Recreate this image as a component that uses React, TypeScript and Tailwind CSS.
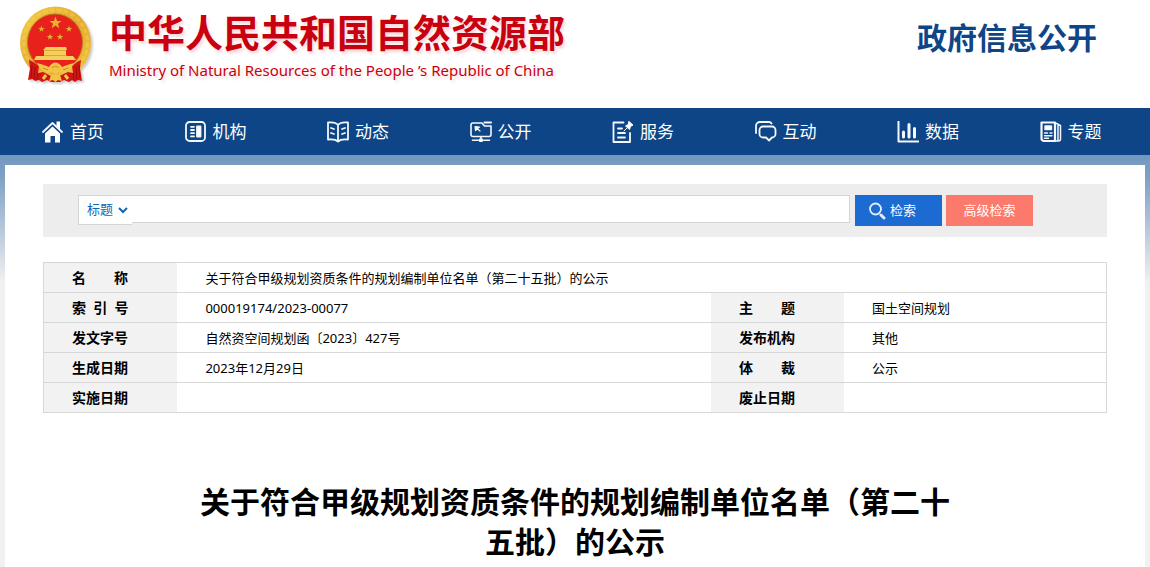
import React from "react";

const star = "M0 -10 L2.4 -3.1 L9.5 -3.1 L3.8 1.2 L5.9 8.1 L0 3.9 L-5.9 8.1 L-3.8 1.2 L-9.5 -3.1 L-2.4 -3.1 Z";

function Emblem() {
  return (
    <svg viewBox="0 0 74 80" className="h-20 w-[74px] shrink-0 drop-shadow-[2px_2px_1px_rgba(0,0,0,0.2)]" aria-hidden="true">
      <defs>
        <linearGradient id="gold" x1="0" y1="0" x2="1" y2="1">
          <stop offset="0" stopColor="#f6cf4a" />
          <stop offset="0.5" stopColor="#e2a92e" />
          <stop offset="1" stopColor="#f3c63f" />
        </linearGradient>
      </defs>
      <ellipse cx="36.500" cy="37" rx="35.500" ry="36.500" fill="url(#gold)" />
      <ellipse cx="36.500" cy="37" rx="32" ry="33" fill="none" stroke="#f8d95f" strokeWidth="3" strokeDasharray="5 2" opacity="0.35" />
      <ellipse cx="36" cy="36.500" rx="27.500" ry="28.500" fill="#e8211d" stroke="#b8741c" strokeWidth="1" />
      <g fill="#e3b32f">
        <path d={star} transform="translate(36.500 17) scale(0.65)" />
        <path d={star} transform="translate(22.500 23) scale(0.34)" />
        <path d={star} transform="translate(50 23) scale(0.34)" />
        <path d={star} transform="translate(31 31) scale(0.34)" />
        <path d={star} transform="translate(41 31) scale(0.34)" />
      </g>
      <path d="M27 41h20l1 3h-1v6h7l3 4H15l2-4h8v-6h-1z" fill="#f5cf5b" />
      <path d="M26 44.500h21M25 49.500h23" stroke="#d79a2b" strokeWidth="0.800" />
      <path d="M10 54c3 1 6 3 10 6l-1 7 5-1 12 6 13-6 5 1-1-7c4-3 6-5 9-6l-1 8 2 13-4-1-3 2-3-2-3 2-5-2-4 2h-9l-4-2-5 2-3-2-4 1-2-2-5 1 2-12z" fill="#d21415" />
      <path d="M13 59l-1 13M16 61l-1 13M19 67l-1 7M60 59l1 13M57 61l1 13M54 67l1 7" stroke="#9c0d0f" strokeWidth="0.900" />
      <path d="M18 57c5 1 9 3 12 4 2-3 4-4.500 6.500-4.500S41 58 43 61c3-1 7-3 12-4-2 5-6 9-11 10l-4-1-3.500 2-3.500-2-4 1c-5-1-9-5-11-10z" fill="#f2c445" />
      <path d="M33 62c1-2 6-2 7 0M24 62l5 2M49 62l-5 2" fill="none" stroke="#c98a20" strokeWidth="1" />
      <path d="M32 69h9l2 6-4-1-2.500 2-2.500-2-4 1z" fill="#f2c445" />
      <path d="M27 69l-3 4M46 69l3 4" stroke="#f2c445" strokeWidth="3" />
    </svg>
  );
}

function NavIcon({ children }: { children: React.ReactNode }) {
  return (
    <svg viewBox="0 0 22 22" className="size-[22px] shrink-0" fill="none" stroke="#f4f7fb" strokeWidth="1.800" strokeLinejoin="round" strokeLinecap="round" aria-hidden="true">
      {children}
    </svg>
  );
}

const navItems = [
  {
    label: "首页",
    icon: (
      <>
        <path d="M3 12.500 10.500 5.500l7.500 7V21.500H13v-6.500H8.500v6.500H3z" fill="#fff" stroke="none" />
        <path d="M1 11 10.500 2l9.500 9" />
        <path d="M14.500 0.500h3.500v8l-3.500-3.500z" fill="#fff" stroke="none" />
      </>
    ),
  },
  {
    label: "机构",
    icon: (
      <>
        <rect x="1" y="1" width="19" height="19" rx="3.500" />
        <path d="M12 5.500h3.500v10H12z" fill="#fff" />
        <path d="M6 5.800h3M6 9h3M6 12.200h3M6 15.400h3" />
      </>
    ),
  },
  {
    label: "动态",
    icon: (
      <>
        <path d="M11 4C9 1.500 5 1 1 1.500v17c4-.5 8 0 10 2 2-2 6-2.500 10-2v-17c-4-.5-8 0-10 2.500zM11 4v16" />
        <path d="M4 7l3 1M4 12l3 1M15 8l3-1M15 13l3-1" strokeWidth="1.800" />
      </>
    ),
  },
  {
    label: "公开",
    icon: (
      <>
        <path d="M12 2H3a2 2 0 0 0-2 2v9.500a2 2 0 0 0 2 2h16a2 2 0 0 0 2-2V5h-6.500z" strokeWidth="1.600" />
        <path d="M14.500 1.500h6.500" strokeWidth="2" />
        <path d="M5 5.500l4.500.5L5.500 9.500zM7 7.500l3 2.500" strokeWidth="1.200" fill="#fff" />
        <path d="M11 16v3M2.500 19.200h6M13.500 19.200h6" strokeWidth="1.600" />
        <rect x="9" y="17.500" width="4" height="3.500" rx="1" fill="#fff" stroke="none" />
      </>
    ),
  },
  {
    label: "服务",
    icon: (
      <>
        <path d="M11.500 1.500H1.500v19.500h16.500V12" />
        <path d="M6 7.500h4M6 12h7M6 16.500h7" />
        <path d="M17 0.500 21 4l-2.500 1.500-1 3-4-3.500 2.500-1.500zM15 7l-3 3" fill="#fff" strokeWidth="1" />
      </>
    ),
  },
  {
    label: "互动",
    icon: (
      <>
        <path d="M1 12V5a4 4 0 0 1 4-4h9a3 3 0 0 1 2.500 1.500" />
        <path d="M8 5.500h9a3.500 3.500 0 0 1 3.500 3.500v4a3.500 3.500 0 0 1-3.500 3.500l-3 3-3-3H8A3.500 3.500 0 0 1 4.500 13V9A3.500 3.500 0 0 1 8 5.500z" />
      </>
    ),
  },
  {
    label: "数据",
    icon: (
      <>
        <path d="M1.500 1v19.500H21.500" strokeLinecap="square" strokeWidth="2" />
        <path d="M6.500 11v5M12 3.500v12.500M17.500 7.500v8.500" strokeWidth="3" />
      </>
    ),
  },
  {
    label: "专题",
    icon: (
      <>
        <path d="M1.500 1.500H15V20H4a2.500 2.500 0 0 1-2.500-2.500z" strokeWidth="2.200" />
        <path d="M15 2l3 1v15.500A1.500 1.500 0 0 1 16.500 20H15M18 3.500l2.500 1V18a2 2 0 0 1-2 2h-3" strokeWidth="1.500" />
        <path d="M5 5h6.500v3.500H5z" fill="#fff" strokeWidth="1.400" />
        <path d="M4.500 12h3M10 12h2M4.500 14.700h7.500M4.500 17.300h4" strokeWidth="1.400" />
      </>
    ),
  },
];

const title = "关于符合甲级规划资质条件的规划编制单位名单（第二十五批）的公示";

const rows = [
  ["索\u00a0\u00a0引\u00a0\u00a0号", "000019174/2023-00077", "主\u3000\u3000题", "国土空间规划"],
  ["发文字号", "自然资空间规划函〔2023〕427号", "发布机构", "其他"],
  ["生成日期", "2023年12月29日", "体\u3000\u3000裁", "公示"],
  ["实施日期", "", "废止日期", ""],
];

const rowClass = "h-[30px] border-y border-[#d7d7d7]";
const labelClass = "bg-[#f2f2f2] pl-7 text-left text-sm leading-5 font-bold";
const valueClass = "pl-7 text-[13px] leading-5";

export default function App() {
  return (
    <div className="min-h-screen bg-white font-['Noto_Sans','Noto_Sans_CJK_SC',sans-serif] text-black">
      <header className="flex h-[108px] items-start justify-between pr-[53px] pl-[19px]">
        <div className="flex items-start gap-4 pt-[6px]">
          <Emblem />
          <div className="text-[#c9000f] [text-shadow:2px_3px_3px_rgba(201,0,15,0.15)]">
            <p className="text-[38px] leading-[52px] font-bold">中华人民共和国自然资源部</p>
            <p className="text-[15px] leading-6">Ministry of Natural Resources of the People ’s Republic of China</p>
          </div>
        </div>
        <p className="pt-4 text-[30px] leading-[44px] font-bold text-[#0e4587]">政府信息公开</p>
      </header>

      <nav className="bg-[#0d4587] px-[5px]">
        <ul className="grid h-[47px] grid-cols-8">
          {navItems.map((item) => (
            <li key={item.label} className="flex items-center pl-[37px]">
              <a href="#" className="flex items-center gap-[6px] text-[17px] leading-6 text-white">
                <NavIcon>{item.icon}</NavIcon>
                {item.label}
              </a>
            </li>
          ))}
        </ul>
      </nav>

      <div className="bg-[#f1f1f1] bg-[linear-gradient(#7398bf_0px,#7d9fc4_20px,#f1f1f1_128px)] px-[5px] pt-[10px]">
        <main className="min-h-[402px] bg-white px-[38px] pt-[19px]">
          <form className="flex h-[53px] items-start bg-[#ededed] pt-[11px] pr-[74px] pl-[35px]" onSubmit={(e) => e.preventDefault()}>
            <div className="relative shrink-0">
              <select aria-label="检索范围" className="h-[30px] w-[54px] appearance-none border border-r-0 border-[#d5d5d5] bg-white pl-2 text-[13px] text-[#0f67b5] outline-none">
                <option>标题</option>
              </select>
              <svg viewBox="0 0 10 8" className="pointer-events-none absolute top-[11px] right-1 h-2 w-[10px]" fill="none" stroke="#0f67b5" strokeWidth="2" aria-hidden="true">
                <path d="M1 2l4 4 4-4" />
              </svg>
            </div>
            <input type="text" aria-label="检索内容" className="h-7 min-w-0 flex-1 border border-l-0 border-[#d5d5d5] bg-white px-2 text-[13px] outline-none" />
            <button type="submit" className="ml-[5px] flex h-[31px] w-[87px] shrink-0 items-center gap-1 bg-[#1c6bd2] pl-[13px] text-[13px] text-white">
              <svg viewBox="0 0 18 18" className="size-[18px]" fill="none" stroke="#e4eefb" strokeWidth="1.800" strokeLinecap="round" aria-hidden="true">
                <circle cx="7.500" cy="7" r="5.500" />
                <path d="M13 13l3 3" strokeWidth="3" />
              </svg>
              检索
            </button>
            <button type="button" className="ml-1 h-[31px] w-[87px] shrink-0 bg-[#fb7a6c] text-[13px] text-white">
              高级检索
            </button>
          </form>

          <table className="mt-[25px] w-full table-fixed border-collapse border border-[#d7d7d7]">
            <colgroup>
              <col className="w-[12.6%]" />
              <col className="w-[50.2%]" />
              <col className="w-[12.5%]" />
              <col />
            </colgroup>
            <tbody>
              <tr className={rowClass}>
                <th scope="row" className={labelClass}>名{"\u3000\u3000"}称</th>
                <td colSpan={3} className={valueClass}>{title}</td>
              </tr>
              {rows.map(([a, b, c, d]) => (
                <tr key={a} className={rowClass}>
                  <th scope="row" className={labelClass}>{a}</th>
                  <td className={valueClass}>{b}</td>
                  <th scope="row" className={labelClass}>{c}</th>
                  <td className={valueClass}>{d}</td>
                </tr>
              ))}
            </tbody>
          </table>

          <h1 className="mx-auto mt-[69px] max-w-[770px] text-center text-[30px] leading-10 font-bold">{title}</h1>
        </main>
      </div>
    </div>
  );
}
